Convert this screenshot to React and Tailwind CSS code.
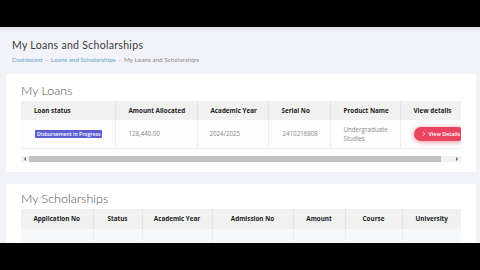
import React from 'react'
import { ChevronRight } from 'lucide-react'

const loanCols = [
  { label: 'Loan status', w: 'w-[94px]' },
  { label: 'Amount Allocated', w: 'w-[82px]' },
  { label: 'Academic Year', w: 'w-[71px]' },
  { label: 'Serial No', w: 'w-[62px]' },
  { label: 'Product Name', w: 'w-[70px]' },
  { label: 'View details', w: 'w-[61px]' }
]

const scholarshipCols = [
  { label: 'Application No', w: 'w-[72px]' },
  { label: 'Status', w: 'w-[49px]' },
  { label: 'Academic Year', w: 'w-[70px]' },
  { label: 'Admission No', w: 'w-[81px]' },
  { label: 'Amount', w: 'w-[52px]' },
  { label: 'Course', w: 'w-[57px]' },
  { label: 'University', w: 'w-[59px]' }
]

function Scrollbar () {
  return (
    <div className="mt-[7px] h-[6px] w-full bg-[#f1f1f1] flex items-center">
      <div className="w-[8px] flex justify-center">
        <div className="w-0 h-0 border-y-[2px] border-y-transparent border-r-[2px] border-r-[#606060]" />
      </div>
      <div className="h-[6px] w-[412px] bg-[#c1c1c1]" />
      <div className="flex-1" />
      <div className="w-[8px] flex justify-center">
        <div className="w-0 h-0 border-y-[2px] border-y-transparent border-l-[2px] border-l-[#606060]" />
      </div>
    </div>
  )
}

export default function App () {
  return (
    <div className="w-[480px] h-[270px] bg-black flex flex-col overflow-hidden font-['Open_Sans',sans-serif]">
      <div className="h-[27px] shrink-0 bg-black" />

      <div className="h-[216px] shrink-0 bg-[#f2f3f8] overflow-hidden border-t-[3px] border-[#e4e5ea]">
        {/* Page title + breadcrumb */}
        <div className="px-[12px] pt-[8px]">
          <h1 className="text-[10.5px] leading-[15px] font-normal text-[#3a3a3a] tracking-[0.3px] font-['Lato',sans-serif]">
            My Loans and Scholarships
          </h1>
          <div className="mt-[2px] flex items-center gap-[3px] text-[6.4px] leading-[9px] font-['Lato',sans-serif]">
            <span className="text-[#5ba8c6]">Dashboard</span>
            <span className="text-[#999]">-</span>
            <span className="text-[#5ba8c6]">Loans and Scholarships</span>
            <span className="text-[#999]">-</span>
            <span className="text-[#888]">My Loans and Scholarships</span>
          </div>
        </div>

        {/* My Loans card */}
        <div className="mt-[10px] mx-[6px] w-[470px] h-[98px] bg-white px-[15px] pt-[7px]">
          <h2 className="text-[12.5px] leading-[20px] text-[#505050] font-light font-['Lato',sans-serif]">My Loans</h2>
          <div className="w-[440px] overflow-hidden">
            <table className="table-fixed border-collapse w-[440px]">
              <thead>
                <tr className="h-[19px] bg-[#f1f1f1]">
                  {loanCols.map((c, i) => (
                    <th
                      key={c.label}
                      className={`${c.w} text-left pl-[13px] text-[6.3px] font-bold text-[#222] ${i > 0 ? 'border-l border-[#e3e3e3]' : ''}`}
                    >
                      {c.label}
                    </th>
                  ))}
                </tr>
              </thead>
              <tbody>
                <tr className="h-[28px] bg-[#fdfdfd] border-b border-[#eeeeee] text-[6.2px] text-[#8a8a8a]">
                  <td className="pl-[14px]">
                    <span className="inline-block bg-[#5c5ed3] text-white font-semibold text-[5.1px] leading-[8px] px-[2px] rounded-[1px] whitespace-nowrap">
                      Disbursement in Progress
                    </span>
                  </td>
                  <td className="pl-[13px] border-l border-[#eeeeee]">128,440.00</td>
                  <td className="pl-[12px] border-l border-[#eeeeee]">2024/2025</td>
                  <td className="pl-[14px] border-l border-[#eeeeee]">2410216808</td>
                  <td className="pl-[13px] border-l border-[#eeeeee] leading-[9px]">
                    Undergraduate<br />Studies
                  </td>
                  <td className="pl-[13px] border-l border-[#eeeeee]">
                    <span className="inline-flex items-center gap-[2px] h-[14px] pl-[7px] pr-[5px] rounded-full bg-[#ea4560] text-white text-[5.4px] font-semibold whitespace-nowrap shadow-[0_1px_5px_rgba(234,69,96,0.6)]">
                      <ChevronRight size={6} strokeWidth={3} />
                      View Details
                    </span>
                  </td>
                </tr>
              </tbody>
            </table>
          </div>
          <Scrollbar />
        </div>

        {/* My Scholarships card */}
        <div className="mt-[12px] mx-[6px] w-[470px] h-[80px] bg-white px-[15px] pt-[5px]">
          <h2 className="text-[12.5px] leading-[20px] text-[#505050] font-light font-['Lato',sans-serif]">My Scholarships</h2>
          <table className="table-fixed border-collapse w-[440px]">
            <thead>
              <tr className="h-[20px] bg-[#f1f1f1]">
                {scholarshipCols.map((c, i) => (
                  <th
                    key={c.label}
                    className={`${c.w} text-center text-[6.3px] font-bold text-[#222] ${i > 0 ? 'border-l border-[#e3e3e3]' : ''}`}
                  >
                    {c.label}
                  </th>
                ))}
              </tr>
            </thead>
            <tbody>
              <tr className="h-[20px] bg-[#f6f9fc]">
                {scholarshipCols.map((c, i) => (
                  <td key={c.label} className={i > 0 ? 'border-l border-[#eeeeee]' : ''} />
                ))}
              </tr>
            </tbody>
          </table>
        </div>
      </div>

      <div className="h-[27px] shrink-0 bg-black" />
    </div>
  )
}
